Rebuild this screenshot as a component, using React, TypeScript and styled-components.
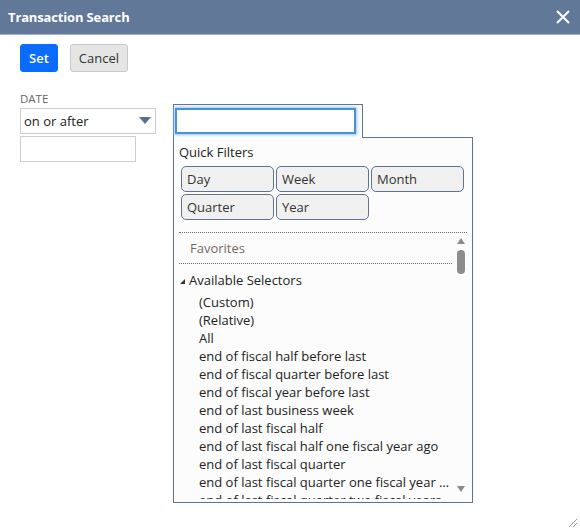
import React from 'react';
import styled, { createGlobalStyle } from 'styled-components';

const GlobalStyle = createGlobalStyle`
  html, body {
    margin: 0;
    padding: 0;
    background: #ffffff;
  }
  body {
    font-family: 'Open Sans', 'Liberation Sans', sans-serif;
    font-size: 13px;
    color: #222;
  }
  * {
    box-sizing: border-box;
  }
`;

const Dialog = styled.div`
  position: relative;
  width: 580px;
  height: 530px;
  background: #ffffff;
  overflow: hidden;
`;

const Header = styled.div`
  height: 35px;
  background: #617899;
  border-bottom: 1px solid #a6b3c7;
  display: flex;
  align-items: center;
  justify-content: space-between;
  padding: 0 10px 0 8px;
`;

const Title = styled.div`
  color: #ffffff;
  font-weight: 700;
  font-size: 13px;
  letter-spacing: -0.15px;
`;

const CloseButton = styled.div`
  width: 14px;
  height: 14px;
  display: flex;
  cursor: pointer;
`;

const Body = styled.div`
  padding: 9px 20px 0;
`;

const Toolbar = styled.div`
  display: flex;
  gap: 12px;
`;

const Button = styled.button<{ $primary?: boolean }>`
  height: 28px;
  padding: 0 8px;
  font-family: 'Open Sans', 'Liberation Sans', sans-serif;
  font-size: 13px;
  border-radius: 3px;
  border: 1px solid ${(p) => (p.$primary ? '#0a6cff' : '#c9c9c9')};
  background: ${(p) => (p.$primary ? '#0a6cff' : '#e5e5e5')};
  color: ${(p) => (p.$primary ? '#ffffff' : '#333333')};
  font-weight: ${(p) => (p.$primary ? 600 : 400)};
  cursor: pointer;
`;

const FormRow = styled.div`
  display: flex;
  align-items: flex-start;
  margin-top: 20px;
`;

const FieldColumn = styled.div`
  width: 153px;
  display: flex;
  flex-direction: column;
`;

const Label = styled.div`
  font-size: 11.5px;
  line-height: 14px;
  color: #666666;
  text-transform: uppercase;
  margin-bottom: 2px;
`;

const Select = styled.div`
  width: 136px;
  height: 26px;
  border: 1px solid #cccccc;
  display: flex;
  align-items: center;
  justify-content: space-between;
  padding: 0 4px 0 3px;
  font-size: 13px;
  color: #222;
`;

const Caret = styled.span`
  width: 0;
  height: 0;
  border-left: 6px solid transparent;
  border-right: 6px solid transparent;
  border-top: 7px solid #5b6f8f;
  margin-top: -1px;
`;

const DateInput = styled.div`
  width: 116px;
  height: 26px;
  border: 1px solid #cccccc;
  margin-top: 2px;
`;

const Popup = styled.div`
  margin-top: 12px;
  display: flex;
  flex-direction: column;
`;

const Tab = styled.div`
  position: relative;
  z-index: 1;
  width: 190px;
  height: 34px;
  margin-bottom: -1px;
  border: 1px solid #5f7391;
  border-bottom: none;
  background: #fdfdfd;
  padding: 3px 0 0 1px;
`;

const FocusInput = styled.div`
  width: 181px;
  height: 26px;
  background: #ffffff;
  border: 2px solid #4a90d9;
  box-shadow: 0 0 3px 1px #9cc6ef;
`;

const Panel = styled.div`
  width: 300px;
  height: 366px;
  border: 1px solid #5f7391;
  background: #fcfcfc;
  display: flex;
  flex-direction: column;
  padding: 5px 5px 3px;
`;

const SectionTitle = styled.div`
  line-height: 18px;
  color: #222;
`;

const FilterGrid = styled.div`
  display: grid;
  grid-template-columns: repeat(3, 93px);
  grid-auto-rows: 26px;
  gap: 2px;
  margin: 5px 0 0 2px;
`;

const FilterButton = styled.div`
  border: 1px solid #5f7391;
  border-radius: 5px;
  background: #f0f0f0;
  display: flex;
  align-items: center;
  padding-left: 5px;
  color: #333;
  line-height: 18px;
`;

const ScrollArea = styled.div`
  flex: 1;
  min-height: 0;
  margin-top: 12px;
  border-top: 1px dotted #6a6a6a;
  display: flex;
  overflow: hidden;
`;

const ScrollContent = styled.div`
  flex: 1;
  min-width: 0;
  display: flex;
  flex-direction: column;
  & > * {
    flex-shrink: 0;
  }
`;

const Favorites = styled.div`
  height: 31px;
  border-bottom: 1px dotted #6a6a6a;
  padding-left: 11px;
  display: flex;
  align-items: center;
  color: #76695f;
`;

const GroupHeader = styled.div`
  margin-top: 7px;
  display: flex;
  align-items: center;
  line-height: 18px;
  padding-left: 1px;
  color: #222;
`;

const GroupArrow = styled.span`
  width: 0;
  height: 0;
  border-left: 5px solid transparent;
  border-bottom: 5px solid #333;
  margin-right: 4px;
  margin-top: 3px;
`;

const ItemList = styled.div`
  display: flex;
  flex-direction: column;
  margin-top: 4px;
`;

const Item = styled.div`
  line-height: 18px;
  padding-left: 20px;
  white-space: nowrap;
  overflow: hidden;
  text-overflow: ellipsis;
  color: #222;
`;

const ScrollBar = styled.div`
  width: 15px;
  display: flex;
  flex-direction: column;
  align-items: center;
  padding: 5px 0 7px 2px;
`;

const ArrowUp = styled.span`
  width: 0;
  height: 0;
  border-left: 4px solid transparent;
  border-right: 4px solid transparent;
  border-bottom: 6px solid #8a8a8a;
`;

const ArrowDown = styled.span`
  width: 0;
  height: 0;
  border-left: 4px solid transparent;
  border-right: 4px solid transparent;
  border-top: 6px solid #8a8a8a;
  margin-top: auto;
`;

const Thumb = styled.span`
  width: 8px;
  height: 24px;
  border-radius: 4px;
  background: #8c8c8c;
  margin-top: 6px;
`;

const ResizeGrip = styled.svg`
  position: absolute;
  right: 2px;
  bottom: 2px;
`;

const items = [
  '(Custom)',
  '(Relative)',
  'All',
  'end of fiscal half before last',
  'end of fiscal quarter before last',
  'end of fiscal year before last',
  'end of last business week',
  'end of last fiscal half',
  'end of last fiscal half one fiscal year ago',
  'end of last fiscal quarter',
  'end of last fiscal quarter one fiscal year ago',
  'end of last fiscal quarter two fiscal years ago',
];

const filters = ['Day', 'Week', 'Month', 'Quarter', 'Year'];

function App() {
  return (
    <Dialog>
      <GlobalStyle />
      <Header>
        <Title>Transaction Search</Title>
        <CloseButton>
          <svg width="14" height="14" viewBox="0 0 14 14">
            <path d="M1 1 L13 13 M13 1 L1 13" stroke="#ffffff" strokeWidth="2" />
          </svg>
        </CloseButton>
      </Header>
      <Body>
        <Toolbar>
          <Button $primary>Set</Button>
          <Button>Cancel</Button>
        </Toolbar>
        <FormRow>
          <FieldColumn>
            <Label>Date</Label>
            <Select>
              on or after
              <Caret />
            </Select>
            <DateInput />
          </FieldColumn>
          <Popup>
            <Tab>
              <FocusInput />
            </Tab>
            <Panel>
              <SectionTitle>Quick Filters</SectionTitle>
              <FilterGrid>
                {filters.map((f) => (
                  <FilterButton key={f}>{f}</FilterButton>
                ))}
              </FilterGrid>
              <ScrollArea>
                <ScrollContent>
                  <Favorites>Favorites</Favorites>
                  <GroupHeader>
                    <GroupArrow />
                    Available Selectors
                  </GroupHeader>
                  <ItemList>
                    {items.map((i) => (
                      <Item key={i}>{i}</Item>
                    ))}
                  </ItemList>
                </ScrollContent>
                <ScrollBar>
                  <ArrowUp />
                  <Thumb />
                  <ArrowDown />
                </ScrollBar>
              </ScrollArea>
            </Panel>
          </Popup>
        </FormRow>
      </Body>
      <ResizeGrip width="10" height="10" viewBox="0 0 10 10">
        <path d="M9 1 L1 9 M9 5 L5 9" stroke="#9a9a9a" strokeWidth="1" />
      </ResizeGrip>
    </Dialog>
  );
}

export default App;
